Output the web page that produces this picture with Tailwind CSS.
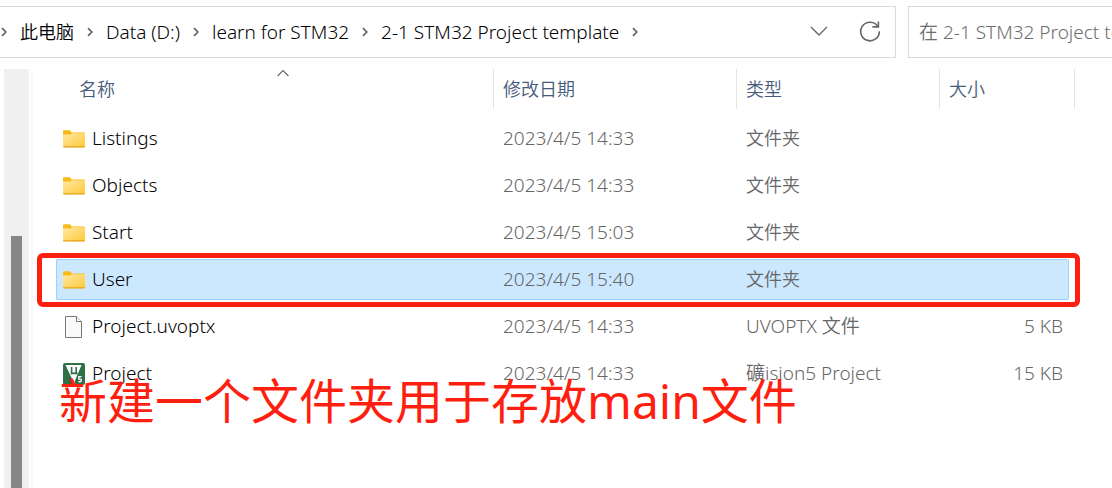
<!DOCTYPE html>
<html lang="zh-CN">
<head>
  <meta charset="UTF-8" />
  <meta name="viewport" content="width=device-width, initial-scale=1" />
  <title>2-1 STM32 Project template</title>
  <script src="https://cdn.jsdelivr.net/npm/@tailwindcss/browser@4"></script>
</head>
<body class="relative flex h-screen flex-col overflow-hidden bg-white pt-[6px] font-['Noto_Sans','Noto_Sans_CJK_SC',sans-serif] text-[18px] font-[350] text-black">

  <!-- icon shared by the folder rows -->
  <svg class="absolute h-0 w-0">
    <defs>
      <linearGradient id="folderFill" x1="0" y1="0" x2="1" y2="1">
        <stop offset="0" stop-color="#ffe9a6" />
        <stop offset="1" stop-color="#ffc937" />
      </linearGradient>
    </defs>
    <symbol id="folder" viewBox="0 0 22 18">
      <path d="M0 1.5Q0 .3 1.2 .3H6.3Q7.2 .3 7.8 1.2L8.6 2.4H21Q22 2.4 22 3.4V6H0z" fill="#f9b917" />
      <path d="M0 4.6H6.8Q7.6 4.6 8.2 4L9 3.2H22V16.4Q22 17.2 21.2 17.2H.8Q0 17.2 0 16.4z" fill="url(#folderFill)" />
      <path d="M0 16.3H22Q22 17.4 21 17.4H1Q0 17.4 0 16.3z" fill="#e8a21c" />
    </symbol>
    <symbol id="crumb" viewBox="0 0 6 10">
      <path d="M1 1.2L4.8 5L1 8.8" fill="none" stroke="#666" stroke-width="1.7" />
    </symbol>
  </svg>

  <!-- ADDRESS BAR -->
  <header class="flex h-[52px] shrink-0 gap-3">
    <div class="flex min-w-0 flex-1 items-center border border-l-0 border-[#d9d9d9] pr-3">
      <nav aria-label="路径" class="flex flex-1 items-center gap-[13px] whitespace-nowrap pl-[1px]">
        <svg class="h-[10px] w-[6px]"><use href="#crumb" /></svg>
        <a href="#">此电脑</a>
        <svg class="h-[10px] w-[6px]"><use href="#crumb" /></svg>
        <a href="#" class="text-[19px]">Data (D:)</a>
        <svg class="h-[10px] w-[6px]"><use href="#crumb" /></svg>
        <a href="#" class="text-[19px]">learn for STM32</a>
        <svg class="h-[10px] w-[6px]"><use href="#crumb" /></svg>
        <a href="#" class="text-[19px]">2-1 STM32 Project template</a>
        <svg class="h-[10px] w-[6px]"><use href="#crumb" /></svg>
      </nav>
      <button type="button" aria-label="历史记录" class="mr-6 p-1">
        <svg class="h-5 w-5" viewBox="0 0 20 20" fill="none" stroke="#666" stroke-width="1.4"><path d="M2 5L10 13L18 5" /></svg>
      </button>
      <button type="button" aria-label="刷新">
        <svg class="h-[26px] w-[26px]" viewBox="0 0 26 26" fill="none" stroke="#666" stroke-width="1.6"><path d="M20.9 7.6A9.3 9.3 0 1 0 22.3 12.2" /><path d="M21.4 2.4V7.9H15.4" /></svg>
      </button>
    </div>
    <div class="w-[204px] shrink-0 border border-r-0 border-[#d9d9d9]">
      <input type="text" aria-label="搜索" placeholder="在 2-1 STM32 Project template 中搜索" class="h-full w-full pl-[10px] text-[19px] outline-none placeholder:text-[#6d6d6d]">
    </div>
  </header>

  <main class="flex min-h-0 flex-1 pl-1">
    <!-- tree scrollbar -->
    <div class="mt-[11px] w-[25px] shrink-0 bg-[#f0f0f0] px-[7px] pt-[167px]">
      <div class="h-full bg-[#868686]"></div>
    </div>
    <div class="mt-[11px] ml-[2px] w-[2px] shrink-0 bg-[#f7f7f7]"></div>

    <!-- FILE LIST -->
    <div class="min-w-0 flex-1 pt-[5px] pr-[43px] pl-[23px]">
      <table class="w-full table-fixed border-separate border-spacing-x-0 border-spacing-y-[6px] text-left whitespace-nowrap">
        <colgroup>
          <col>
          <col class="w-[243px]">
          <col class="w-[203px]">
          <col class="w-[129px]">
        </colgroup>
        <thead class="text-[#455b7a]">
          <tr class="h-[43px] align-top">
            <th class="relative p-0 font-[350]">
              <button type="button" class="h-10 w-full border-r border-[#e5e5e5] pl-[23px] text-left">名称</button>
              <svg class="absolute top-0 left-[221px] h-[8px] w-[12px]" viewBox="0 0 12 8" fill="none" stroke="#666" stroke-width="1.1"><path d="M.6 7L6 1.6L11.4 7" /></svg>
            </th>
            <th class="p-0 font-[350]"><button type="button" class="h-10 w-full border-r border-[#e5e5e5] pl-[9px] text-left">修改日期</button></th>
            <th class="p-0 font-[350]"><button type="button" class="h-10 w-full border-r border-[#e5e5e5] pl-[9px] text-left">类型</button></th>
            <th class="p-0 font-[350]"><button type="button" class="-mr-[6px] h-10 w-[135px] border-r border-[#e5e5e5] pl-[9px] text-left">大小</button></th>
          </tr>
        </thead>
        <tbody class="text-[#666]">
          <tr class="h-[41px]">
            <td class="p-0 pl-[7px]"><a href="#" class="flex items-center gap-[7px] text-[19px] text-black"><svg class="h-[18px] w-[22px]"><use href="#folder" /></svg>Listings</a></td>
            <td class="p-0 pl-[9px] text-[19px]">2023/4/5 14:33</td>
            <td class="p-0 pl-[9px]">文件夹</td>
            <td class="p-0 pr-[6px] text-right text-[19px]"></td>
          </tr>
          <tr class="h-[41px]">
            <td class="p-0 pl-[7px]"><a href="#" class="flex items-center gap-[7px] text-[19px] text-black"><svg class="h-[18px] w-[22px]"><use href="#folder" /></svg>Objects</a></td>
            <td class="p-0 pl-[9px] text-[19px]">2023/4/5 14:33</td>
            <td class="p-0 pl-[9px]">文件夹</td>
            <td class="p-0 pr-[6px] text-right text-[19px]"></td>
          </tr>
          <tr class="h-[41px]">
            <td class="p-0 pl-[7px]"><a href="#" class="flex items-center gap-[7px] text-[19px] text-black"><svg class="h-[18px] w-[22px]"><use href="#folder" /></svg>Start</a></td>
            <td class="p-0 pl-[9px] text-[19px]">2023/4/5 15:03</td>
            <td class="p-0 pl-[9px]">文件夹</td>
            <td class="p-0 pr-[6px] text-right text-[19px]"></td>
          </tr>
          <!-- selected row -->
          <tr class="relative h-[41px]" aria-selected="true">
            <td class="rounded-l-xs border border-r-0 border-[#99d1ff] bg-[#cce8ff] p-0 pl-[6px]">
              <a href="#" class="flex items-center gap-[7px] text-[19px] text-black"><svg class="h-[18px] w-[22px]"><use href="#folder" /></svg>User</a>
              <div class="pointer-events-none absolute -top-[6px] -right-[11px] -bottom-[7px] -left-[19px] rounded-md border-5 border-[#ff1f10]"></div>
            </td>
            <td class="border-y border-[#99d1ff] bg-[#cce8ff] p-0 pl-[9px] text-[19px]">2023/4/5 15:40</td>
            <td class="border-y border-[#99d1ff] bg-[#cce8ff] p-0 pl-[9px]">文件夹</td>
            <td class="rounded-r-xs border border-l-0 border-[#99d1ff] bg-[#cce8ff] p-0 pr-[6px] text-right text-[19px]"></td>
          </tr>
          <tr class="h-[41px]">
            <td class="p-0 pl-[7px]">
              <a href="#" class="flex items-center gap-[7px] text-[19px] text-black">
                <svg class="h-[22px] w-[22px]" viewBox="0 0 22 22" fill="#fafafa" stroke="#777" stroke-width="1"><path d="M2.5 .5H13.5L18.5 5.5V21.5H2.5z" /><path d="M13.5 .5V5.5H18.5" /></svg>Project.uvoptx
              </a>
            </td>
            <td class="p-0 pl-[9px] text-[19px]">2023/4/5 14:33</td>
            <td class="p-0 pl-[9px] text-[19px]">UVOPTX 文件</td>
            <td class="p-0 pr-[6px] text-right text-[19px]">5 KB</td>
          </tr>
          <tr class="h-[41px]">
            <td class="p-0 pl-[7px]">
              <a href="#" class="flex items-center gap-[7px] text-[19px] text-black">
                <svg class="h-[22px] w-[22px]" viewBox="0 0 22 22"><rect width="22" height="22" rx="2" fill="#2f7048" /><path d="M2.5 2H18.5L11 20z" fill="#fff" /><path d="M8.6 4V11.5M8.6 9.6Q11 11.4 13 9.2M13.2 4V10.6H14.6" fill="none" stroke="#2f7048" stroke-width="1.6" /><path d="M18.6 13.6H15.8V16.2Q18.4 15.6 18.4 17.4Q18.2 19.2 15.4 18.6" fill="none" stroke="#fff" stroke-width="1.3" /></svg>Project
              </a>
            </td>
            <td class="p-0 pl-[9px] text-[19px]">2023/4/5 14:33</td>
            <td class="p-0 pl-[9px] text-[19px]">礦ision5 Project</td>
            <td class="p-0 pr-[6px] text-right text-[19px]">15 KB</td>
          </tr>
        </tbody>
      </table>
    </div>
  </main>

  <!-- note written over the list -->
  <p class="absolute top-[365px] left-[59px] text-[48px] leading-[72px] font-normal whitespace-nowrap text-[#ff1f10]">新建一个文件夹用于存放main文件</p>
</body>
</html>
